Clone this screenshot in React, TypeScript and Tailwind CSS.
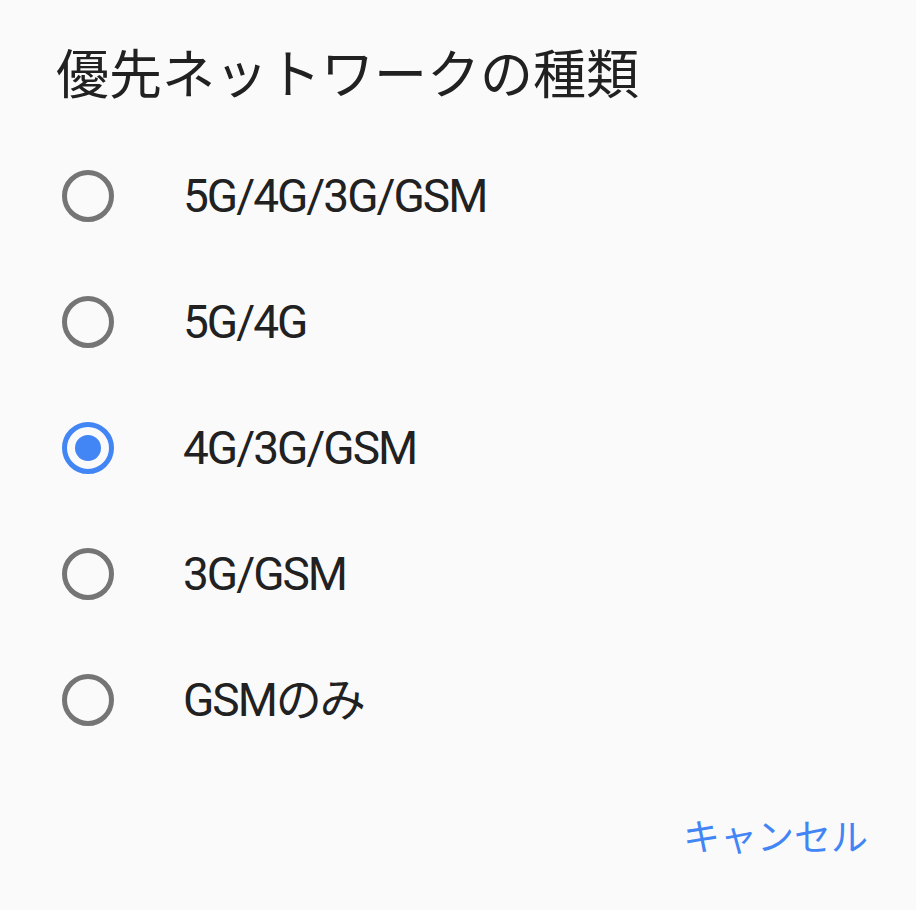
import React from 'react';

const options = ['5G/4G/3G/GSM', '5G/4G', '4G/3G/GSM', '3G/GSM', 'GSMのみ'];

const font = { fontFamily: 'Roboto, "Noto Sans CJK JP", sans-serif' };

export default function App() {
  const selected = 2;
  return (
    <div className="w-[916px] h-[910px] bg-[#fafafa] text-[#212121] flex flex-col" style={font}>
      <h1 className="pl-[56px] pt-[40px] text-[53px] leading-[72px] font-normal">優先ネットワークの種類</h1>
      <div className="flex flex-col mt-[21px]">
        {options.map((opt, i) => (
          <div key={opt} className="flex items-center h-[126px] pl-[62px]">
            {i === selected ? (
              <span className="w-[52px] h-[52px] rounded-full border-[5px] border-[#4285f4] flex items-center justify-center shrink-0">
                <span className="w-[26px] h-[26px] rounded-full bg-[#4285f4]" />
              </span>
            ) : (
              <span className="w-[52px] h-[52px] rounded-full border-[5px] border-[#757575] shrink-0" />
            )}
            <span className="ml-[69px] text-[46px] leading-none tracking-[-2px]">{opt}</span>
          </div>
        ))}
      </div>
      <div className="flex justify-end pr-[48px] mt-[57px]">
        <button className="text-[37px] text-[#4285f4] leading-none">キャンセル</button>
      </div>
    </div>
  );
}
